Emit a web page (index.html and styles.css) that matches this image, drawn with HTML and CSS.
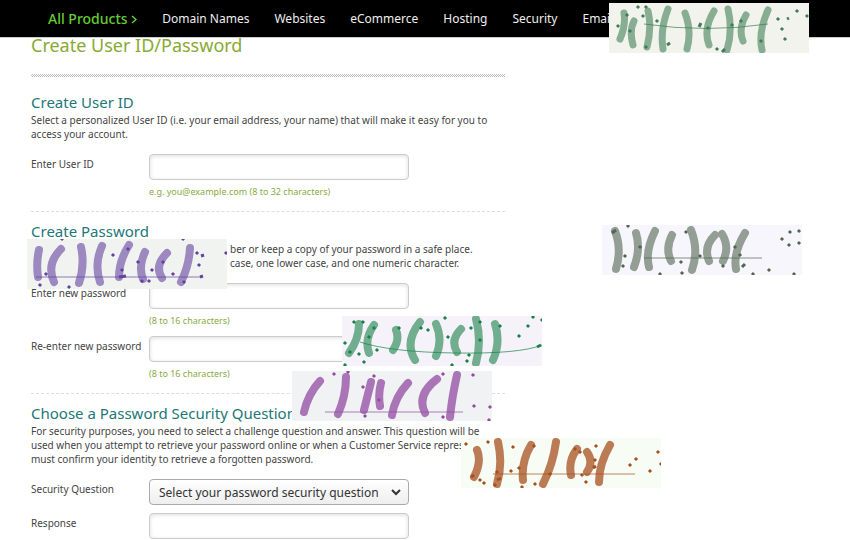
FILE: index.html
```html
<!DOCTYPE html>
<html lang="en">
<head>
<meta charset="utf-8">
<title>Create User ID/Password</title>
<link rel="stylesheet" href="styles.css">
</head>
<body>
<header class="topbar">
  <nav class="nav" aria-label="Products">
    <a class="nav-all" href="#">All Products <svg width="6" height="9" viewBox="0 0 6 9" aria-hidden="true"><path d="M1 1l4 3.500-4 3.500" fill="none" stroke="currentColor" stroke-width="1.500"/></svg></a>
    <a href="#">Domain Names</a>
    <a href="#">Websites</a>
    <a href="#">eCommerce</a>
    <a href="#">Hosting</a>
    <a href="#">Security</a>
    <a href="#">Email</a>
  </nav>
</header>
<main class="content">
  <h1>Create User ID/Password</h1>
  <div class="hatch"></div>
  <form>
    <section class="group">
      <h2>Create User ID</h2>
      <p>Select a personalized User ID (i.e. your email address, your name) that will make it easy for you to<br>access your account.</p>
      <div class="row"><label for="uid">Enter User ID</label><div class="field"><input id="uid" type="text"><small>e.g. you@example.com (8 to 32 characters)</small></div></div>
    </section>
    <section class="group">
      <h2>Create Password</h2>
      <p class="shifted">ber or keep a copy of your password in a safe place.<br>case, one lower case, and one numeric character.</p>
      <div class="row"><label for="pw">Enter new password</label><div class="field"><input id="pw" type="password"><small>(8 to 16 characters)</small></div></div>
      <div class="row"><label for="pw2">Re-enter new password</label><div class="field"><input id="pw2" type="password"><small>(8 to 16 characters)</small></div></div>
    </section>
    <section class="group">
      <h2>Choose a Password Security Question</h2>
      <p>For security purposes, you need to select a challenge question and answer. This question will be<br>used when you attempt to retrieve your password online or when a Customer Service representative<br>must confirm your identity to retrieve a forgotten password.</p>
      <div class="row"><label for="sq">Security Question</label><div class="field select"><select id="sq"><option>Select your password security question</option></select><svg class="chevron" width="10" height="8" viewBox="0 0 10 8" aria-hidden="true"><path d="M1 2l4 4 4-4" fill="none" stroke="currentColor" stroke-width="2"/></svg></div></div>
      <div class="row"><label for="resp">Response</label><div class="field"><input id="resp" type="text"></div></div>
    </section>
  </form>
</main>

<svg class="tile t1" viewBox="0 0 200 50" aria-hidden="true"><path class="blob" d="M11 36q6-14 4-26M24 42q-4-14 1-24M38 44q5-20 1-36M54 46q-3-20 5-40M78 46q5-18-2-36M100 42q-6-16 5-34M118 47q6-20 1-41M134 38q-5-12 3-26M153 47q-4-18 6-40"/><path class="rule" d="M35 21q62 9 124 0"/><path class="speck" d="M8 24l2-2M17 13l2-2M28 5l2-2M36 5l2-2M33 14l2-2M47 19l2-2M20 29l2-2M36 45l2-2M58 42l3-2M90 24l2-4M98 26l2-2M122 23l2-2M131 19l2-2M107 47l2-2M113 49l3-3M151 39l2-2M168 17l2-2M178 16l2-1M187 9l2-2M172 27l2-2M175 37l2-2M197 14l2-2"/></svg>
<svg class="tile t2" viewBox="0 0 200 50" aria-hidden="true"><path class="blob wide" d="M11 38q-2-14 1-27M27 43q-8-18 7-33M52 44q6-18 2-36M73 43q-6-18 2-36M92 38q0-16 10-32M116 40q-5-12 2-27M135 39q-8-12 5-25M154 43q8-16 9-34"/><path class="rule" d="M9 38h166"/><path class="speck" d="M34 1l2-2M12 47l2-2M41 49l2-2M18 36l2-2M85 17l2-2M100 11l2-2M110 24l2-2M94 32l2-2M92 38l7-1M114 43l2-2M121 43l2-2M124 32l2-2M135 24l2-2M145 36l2-2M155 1l2-2M156 44l2-2M169 15l2-2M174 17l3-1M171 27l2-2M173 38l3-1M198 15l2-2"/></svg>
<svg class="tile t3" viewBox="0 0 200 50" aria-hidden="true"><path class="blob wide" d="M14 44q6-20-1-38M32 42q7-18 2-34M47 42q-4-16 6-36M69 36q-6-12 1-26M90 45q7-20-1-40M107 36q-6-14 6-26M121 36q7-14-1-27M134 44q-3-16 9-36"/><path class="rule" d="M42 33h118"/><path class="speck" d="M10 8l4-3M25 2l2-2M22 32l2-2M37 23l2-2M20 42l2-2M57 50l2-2M78 38l2-2M79 49l2-2M83 8l2-2M97 32l2-2M120 42l2-2M132 23l2-2M137 31l2-2M140 42l3-3M150 50l2-2M166 46l2-2M179 15l2-2M187 8l2-2M196 7l2-2M186 21l2-2M196 19l2-2M191 50l2-2"/></svg>
<svg class="tile t4" viewBox="0 0 200 50" aria-hidden="true"><path class="blob wide" d="M7 37q10-14 10-29M27 37q-5-14 5-28M51 34q7-10 3-20M73 44q-11-18 5-38M94 40q7-16 0-32M115 36q-7-12 4-23M134 47q6-22 0-44M151 44q8-18 2-36"/><path class="rule" d="M18 26q30 10 95 11t87-8"/><path class="speck" d="M11 7l2-2M20 7l2-2M2 28l2-2M7 37l2-2M16 39l2-2M21 47l2-2M2 50l2-2M31 13l2-2M26 22l2-2M34 35l2-2M56 13l2-2M78 13l2-2M102 3l2-2M85 15l2-2M105 22l2-2M128 13l2-2M137 7l2-2M137 25l2-2M126 40l2-2M124 46l2-2M109 50l2-2M157 11l2-2M176 21l2-2M185 11l2-2M190 2l2-2M199 5l2-2M195 31l4-2"/></svg>
<svg class="tile t5" viewBox="0 0 200 50" aria-hidden="true"><path class="blob wide dense" d="M12 41q4-18 16-31M46 43q8-18 8-37M72 39q4-16 7-28M88 35q-2-12 1-23M100 44q3-18 16-32M133 42q-9-18 12-34M158 46q2-20 7-42"/><path class="rule" d="M33 41h138"/><path class="speck" d="M55 2l2-2M41 4l2-2M81 6l2-2M70 17l2-2M86 30l2-2M72 46l2-2M150 4l2-2M150 47l2-2M180 5l2-2M181 36l2-2M197 37l2-2M196 50l2-2"/></svg>
<svg class="tile t6" viewBox="0 0 200 50" aria-hidden="true"><path class="blob wide dense" d="M13 39q8-16 3-27M36 46q6-20 1-42M62 42q-2-18 8-35M82 46q10-20 13-42M110 37q-3-14 6-26M126 34q7-10 0-20M138 44q0-18 11-37"/><path class="rule" d="M32 36h142"/><path class="speck" d="M4 7l2-2M26 5l2-2M10 39l3-2M18 43l2-2M22 46l2-2M35 35l2-2M36 42l4-2M33 48l2-2M51 10l2-2M49 34l2-2M57 31l2-2M72 9l2-2M60 50l2-2M73 47l2-2M88 37l2-2M113 12l2-2M118 15l2-2M134 9l2-2M133 23l2-2M132 30l3-2M120 38l2-2M124 45l2-2M168 28l2-2M174 22l2-2M188 34l2-2M196 15l2-2M199 27l2-2"/></svg>
</body>
</html>
```
FILE: styles.css
```css
* { box-sizing: border-box; }
html { overflow: hidden; }
body {
  margin: 0;
  background: #fff;
  color: #444;
  font: 10px/15px "Noto Sans", sans-serif;
}
.topbar {
  height: 38px;
  background: #000;
  border-bottom: 1px solid #ccc;
}
.nav {
  display: flex;
  align-items: center;
  gap: 25px;
  height: 37px;
  padding-left: 48px;
}
.nav a {
  color: #eee;
  font-size: 12px;
  text-decoration: none;
  white-space: nowrap;
}
.nav .nav-all {
  color: #6c3;
  font-size: 14px;
  font-weight: 500;
}
.content {
  max-width: 505px;
  padding-left: 31px;
}
h1, h2, p { margin: 0; font-weight: 400; }
h1 {
  height: 36px;
  color: #8a3;
  font-size: 18px;
  line-height: 14px;
}
.hatch {
  height: 3px;
  background: repeating-conic-gradient(#bbb 0 25%, #fff 0 50%) 0 0 / 2px 2px;
}
.group { padding: 15px 0 12px; }
.group + .group {
  padding-top: 9px;
  border-top: 1px dashed #ddd;
}
h2 {
  color: #277;
  font-size: 15px;
  line-height: 21px;
}
p {
  line-height: 14px;
  white-space: nowrap;
}
.shifted { padding-left: 199px; }
.row {
  display: flex;
  padding-top: 13px;
}
.row + .row { padding-top: 8px; }
label { flex: 0 0 118px; padding-top: 3px; white-space: nowrap; }
.field { width: 260px; }
input, select {
  display: block;
  width: 100%;
  height: 26px;
  border: 1px solid #ccc;
  border-radius: 4px;
}
input {
  padding: 0 6px;
  background: #fff;
  box-shadow: inset 0 1px 4px #ddd;
}
small {
  display: block;
  padding-top: 4px;
  color: #8a4;
  font-size: 9px;
  line-height: 15px;
}
.select { position: relative; }
select {
  appearance: none;
  padding: 0 9px;
  border-color: #aaa;
  background: linear-gradient(#fff, #eee);
  color: #333;
  font: 12px "Noto Sans", sans-serif;
}
.chevron {
  position: absolute;
  top: 9px;
  right: 8px;
  color: #333;
  pointer-events: none;
}
.tile { position: absolute; width: 200px; height: 50px; }
.blob { fill: none; stroke: currentColor; stroke-width: 7px; stroke-linecap: round; opacity: .6; }
.wide { stroke-width: 8px; }
.dense { opacity: .75; }
.speck { fill: none; stroke: currentColor; stroke-width: 3px; }
.rule { fill: none; stroke: currentColor; opacity: .7; }
.t1 { left: 609px; top: 3px; background: #f2f3ed; color: #3f7e56; }
.t2 { left: 27px; top: 239px; background: #f1f3f1; color: #6443a0; }
.t3 { left: 602px; top: 225px; background: #f8f6fd; color: #50664f; }
.t4 { left: 342px; top: 316px; background: #f6f2f9; color: #19814a; }
.t5 { left: 292px; top: 371px; background: #f0f2f4; color: #934ba2; }
.t6 { left: 461px; top: 438px; background: #f7fcf5; color: #a6501f; }
```
